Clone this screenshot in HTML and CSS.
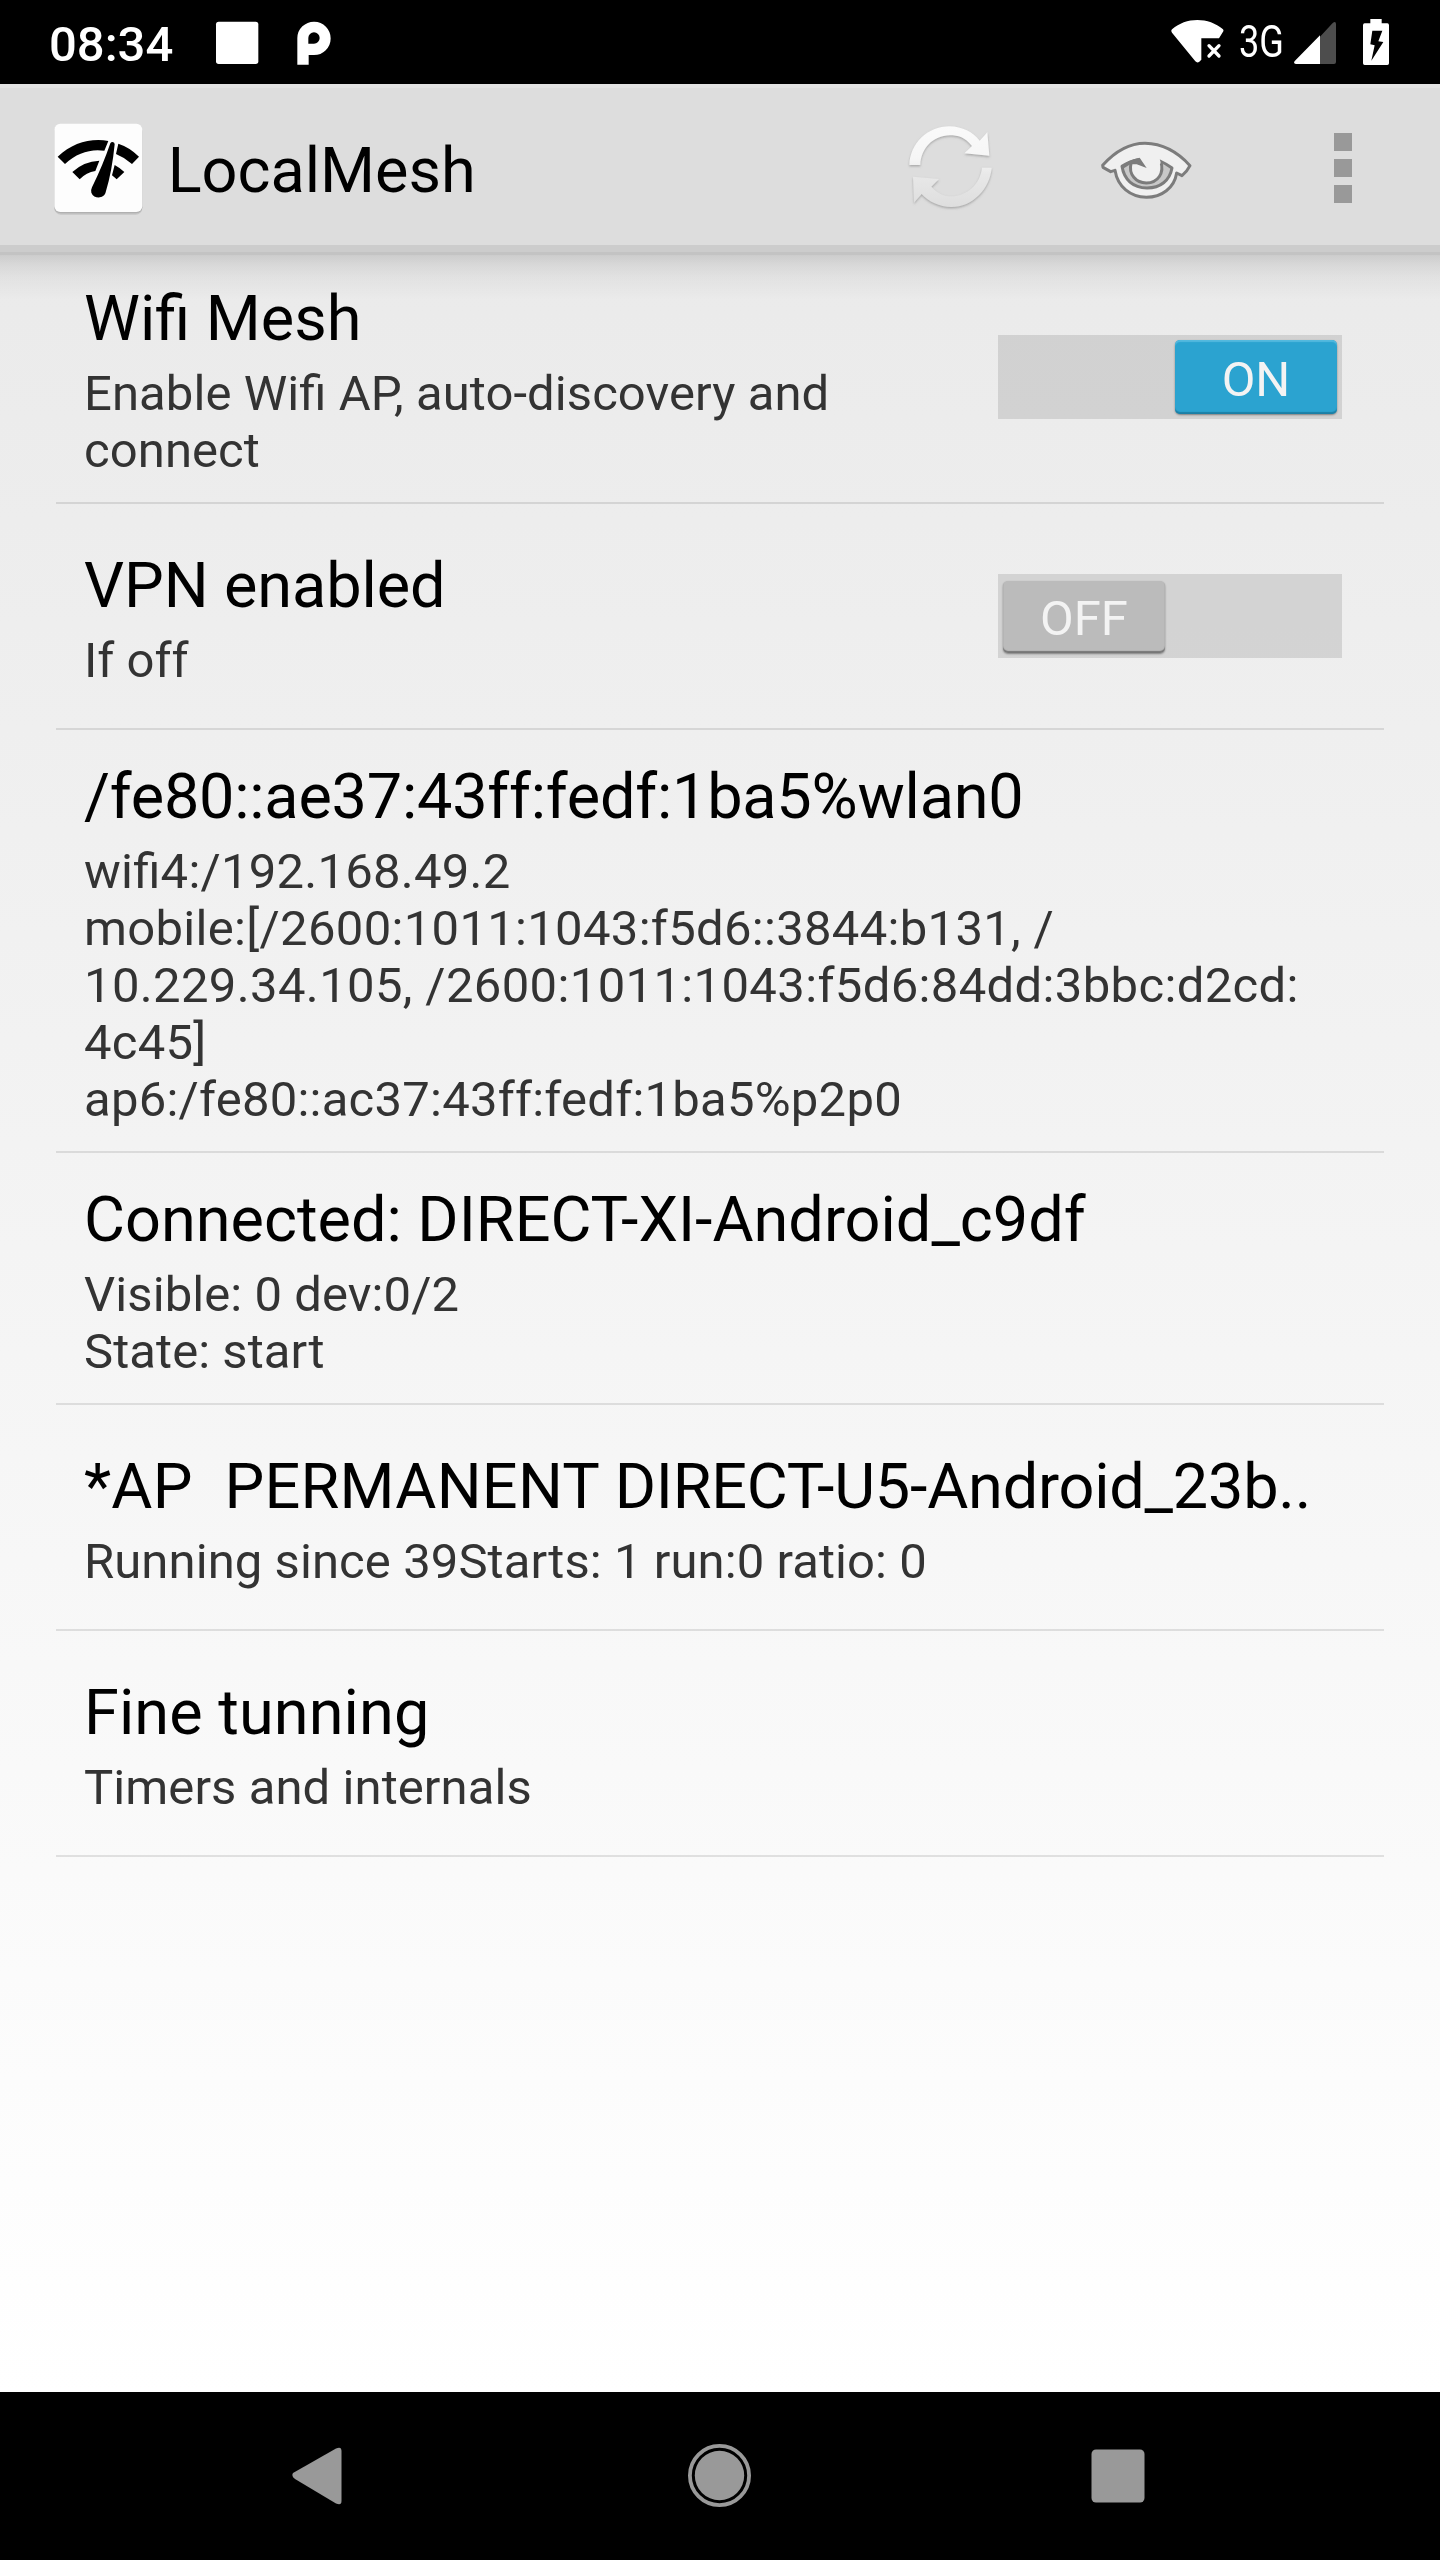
FILE: index.html
```html
<!DOCTYPE html>
<html lang="en">
<head>
<meta charset="utf-8">
<title>LocalMesh</title>
<link rel="stylesheet" href="styles.css">
</head>
<body>
<div class="screen">
  <header class="status-bar">
    <span class="clock">08:34</span>
    <svg class="notif-icons" viewBox="640 50 370 150">
      <rect x="649" y="64" width="127" height="127" rx="8" fill="#fff"/>
      <path fill="#fff" fill-rule="evenodd" d="M893 193V113A50 50 0 1 1 943 164H927V193ZM926 130H943A17 17 0 1 0 926 113Z"/>
    </svg>
    <div class="system-icons">
      <svg class="wifi" viewBox="30 24 171 144">
        <path fill="#fff" d="M34 64Q33 60 37 57C57 40 84 30 112 30S168 40 188 57Q192 60 190 64L177 85H124V149L118 155Q112 160 106 154L36 68Z"/>
        <path stroke="#fff" stroke-width="10" stroke-linecap="round" d="M147 107L177 138M177 107L147 138"/>
      </svg>
      <span class="network">3G</span>
      <svg class="signal" viewBox="0 0 126 126">
        <path fill="#4d4d4d" d="M78 44L114 5Q118 0 122 0Q126 0 126 6V120Q126 126 120 126H78Z"/>
        <path fill="#fff" d="M78 40V126H6Q0 126 0 121Q0 119 3 116Z"/>
      </svg>
      <svg class="battery" viewBox="0 0 78 138">
        <path fill="#fff" fill-rule="evenodd" d="M22 0H56V13H73Q78 13 78 19V133Q78 138 73 138H5Q0 138 0 133V19Q0 13 5 13H22ZM28 35L22 76L35 79L25 125L61 69L46 67L58 35Z"/>
      </svg>
    </div>
  </header>

  <div class="action-bar">
    <svg class="app-icon" viewBox="155 363 279 291">
      <rect x="162" y="376" width="264" height="268" rx="20" fill="#a8a8a8" opacity=".45"/>
      <rect x="162" y="374" width="264" height="266" rx="18" fill="#b0b0b0"/>
      <rect x="162" y="371" width="264" height="265" rx="18" fill="#fdfdfd"/>
      <path d="M172 470C208 436 250 420 294 420Q310 420 324 423L312 452Q302 451 292 451C257 452 224 464 194 492ZM354 431Q388 442 416 470L395 492Q374 473 347 462ZM216 516Q250 484 297 482L285 513Q258 517 238 538ZM343 495Q358 503 372 516L349 538L335 526Z"/>
      <path d="M330 430Q332 426 337 426Q343 427 343 433Q335 515 316 577C311 597 281 598 273 578Q271 570 275 562Q308 495 330 430Z"/>
    </svg>
    <h1 class="app-title">LocalMesh</h1>
    <div class="actions">
      <svg class="refresh" viewBox="45 40 270 270">
        <defs>
          <linearGradient id="arrowFill" gradientUnits="userSpaceOnUse" x1="0" y1="48" x2="0" y2="292">
            <stop offset="0" stop-color="#fafafa"/><stop offset=".4" stop-color="#f6f6f6"/>
            <stop offset=".6" stop-color="#e8e8e8"/><stop offset="1" stop-color="#dedede"/>
          </linearGradient>
          <filter id="arrowShadow" x="-10%" y="-10%" width="120%" height="120%">
            <feDropShadow dx="0" dy="4" stdDeviation="2.4" flood-color="#777" flood-opacity=".55"/>
          </filter>
        </defs>
        <g fill="url(#arrowFill)" filter="url(#arrowShadow)">
          <path d="M55 166C57 102 109 50 176 50C214 51 246 67 266 93L289 68L295 138L220 131L243 109C221 83 203 77 176 77C126 78 90 116 88 166Z"/>
          <path d="M273 174H302C297 237 245 292 181 292C145 291 113 276 92 253L69 279L66 201L144 208L121 231C139 250 158 260 181 260C229 259 268 222 273 174Z"/>
        </g>
      </svg>
      <svg class="eye" viewBox="626 88 284 188">
        <g stroke-linejoin="round" stroke="#7c7c7c" stroke-width="9">
          <path fill="#f0f0f0" d="M637 167C673 127 718 101 764 101C817 102 862 127 899 168C893 180 885 190 875 198L859 190C852 235 814 263 768 263C720 262 682 232 674 182L661 186L638 173Z"/>
          <path fill="#c8c8c8" d="M695 170Q717 154 744 150L766 172L783 151L809 154Q827 162 845 175C838 213 810 235 770 235C728 234 701 210 695 170Z"/>
        </g>
        <path fill="#f0f0f0" stroke="#7c7c7c" stroke-width="9" d="M722 161C714 194 737 220 768 220C803 220 823 190 811 155"/>
        <path fill="#f0f0f0" d="M747 142H807L811 160L795 182L766 190Z"/>
        <path fill="#7c7c7c" d="M692 170Q718 149 748 144L769 175L739 164L720 164L698 177Z"/>
      </svg>
      <div class="overflow"><i></i><i></i><i></i></div>
    </div>
  </div>

  <main class="list">
    <section class="row">
      <div class="text">
        <h2>Wifi Mesh</h2>
        <p class="wide-1">Enable Wifi AP, auto-discovery and<br>connect</p>
      </div>
      <div class="switch on"><span>ON</span></div>
    </section>
    <section class="row single">
      <div class="text">
        <h2 class="tight-1">VPN enabled</h2>
        <p>If off</p>
      </div>
      <div class="switch off"><span>OFF</span></div>
    </section>
    <section class="row">
      <div class="text">
        <h2 class="tight-2">/fe80::ae37:43ff:fedf:1ba5%wlan0</h2>
        <p class="wide-2">wifi4:/192.168.49.2<br><span class="wide-3">mobile:[/2600:1011:1043:f5d6::3844:b131, /</span><br><span class="wide-4">10.229.34.105, /2600:1011:1043:f5d6:84dd:3bbc:d2cd:</span><br>4c45]<br>ap6:/fe80::ac37:43ff:fedf:1ba5%p2p0</p>
      </div>
    </section>
    <section class="row">
      <div class="text">
        <h2>Connected: DIRECT-XI-Android_c9df</h2>
        <p class="wide-1">Visible: 0 dev:0/2<br>State: start</p>
      </div>
    </section>
    <section class="row single">
      <div class="text">
        <h2><span class="wide-2">*AP&nbsp; PERMANENT </span><span class="tight-2">DIRECT-U5-Android_23b..</span></h2>
        <p class="wide-1">Running since 39Starts: 1 run:0 ratio: 0</p>
      </div>
    </section>
    <section class="row single">
      <div class="text">
        <h2 class="wide-1">Fine tunning</h2>
        <p class="wide-1">Timers and internals</p>
      </div>
    </section>
  </main>

  <nav class="nav-bar">
    <svg viewBox="0 0 64 64"><path fill="#999" d="M7 29L50 4.500Q55.500 2 55.500 7V57Q55.500 62 50 59.500L9 35Q5 32 7 29Z"/></svg>
    <svg viewBox="0 0 64 64"><circle cx="33.500" cy="31.500" r="29.600" fill="none" stroke="#999" stroke-width="3.800"/><circle cx="33.500" cy="31.500" r="24.700" fill="#999"/></svg>
    <svg viewBox="0 0 64 64"><rect x="5.500" y="5.500" width="53" height="53" rx="4.500" fill="#999"/></svg>
  </nav>
</div>
</body>
</html>
```
FILE: styles.css
```css
* { box-sizing: border-box; }

body {
  margin: 0;
  font-family: Roboto, "Liberation Sans", sans-serif;
  font-feature-settings: "liga" 1;
}

svg { display: block; flex: none; overflow: visible; }

.screen {
  display: flex;
  flex-direction: column;
  width: 1440px;
  height: 2560px;
  overflow: hidden;
  background: linear-gradient(#e8e8e8, #fff 2392px);
}

/* Status bar */
.status-bar {
  display: flex;
  align-items: flex-start;
  height: 84px;
  padding-left: 49px;
  background: #000;
  color: #fff;
}
.clock {
  width: 164px;
  padding-top: 16px;
  font-size: 49px;
  font-weight: 500;
  line-height: 57px;
}
.notif-icons { width: 123.33px; height: 50px; margin-top: 16.67px; }
.system-icons { display: flex; margin-left: auto; padding-right: 51px; }
.wifi { width: 57px; height: 48px; margin-top: 18px; }
.network {
  width: 67px;
  padding: 16px 0 0 12px;
  font-size: 44px;
  line-height: 52px;
  white-space: nowrap;
  transform: scaleX(.82);
  transform-origin: 12px 0;
}
.signal { width: 42px; height: 42px; margin-top: 22px; }
.battery { width: 26px; height: 46px; margin: 19px 0 0 27px; }

/* Action bar */
.action-bar {
  display: flex;
  align-items: center;
  height: 168px;
  padding: 0 88px 7px 51.67px;
  background: linear-gradient(#e3e3e3 4px, #ddd 4px 161px, #ccc 161px);
}
.app-icon { width: 93px; height: 97px; margin-top: 10px; }
.app-title {
  margin: 13px 0 0 23px;
  font-size: 63px;
  font-weight: 400;
  line-height: 74px;
}
.actions { display: flex; align-items: center; margin-left: auto; padding-top: 7px; }
.refresh { width: 90px; height: 90px; }
.eye { width: 94.67px; height: 62.67px; margin: 5px 0 0 103px; }
.overflow { display: grid; gap: 8px; margin-left: 140.5px; }
.overflow i { width: 18px; height: 18px; background: #999; }

/* Preference list */
.list {
  flex: 1;
  padding: 0 56px;
  background: linear-gradient(#c3c3c3 3px, rgba(0, 0, 0, .13) 3px, rgba(0, 0, 0, .08) 13px, rgba(0, 0, 0, .04) 25px, transparent 48px);
}
.row {
  display: flex;
  align-items: center;
  justify-content: space-between;
  min-height: 226px;
  padding: 0 42px 0 28px;
  border-bottom: 2px solid rgba(0, 0, 0, .1);
}
.text { padding: 30px 0 23px; white-space: nowrap; }
.single .text { margin-bottom: 1px; }
.text h2 {
  margin: 0 0 9px;
  font-size: 63px;
  font-weight: 400;
  line-height: 74px;
}
.text p { margin: 0; color: #333; font-size: 49px; line-height: 57px; }

/* Tracking adjustments */
.wide-1 { letter-spacing: .08px; }
.wide-2 { letter-spacing: .24px; }
.wide-3 { letter-spacing: .31px; }
.wide-4 { letter-spacing: .36px; }
.tight-1 { letter-spacing: -.1px; }
.tight-2 { letter-spacing: -.22px; }

.switch {
  display: flex;
  width: 344px;
  height: 84px;
  padding: 5px;
  background: rgba(0, 0, 0, .11);
}
.switch span {
  width: 162px;
  height: 74px;
  border-radius: 5px;
  color: #f3f3f3;
  font-size: 49px;
  line-height: 79px;
  text-align: center;
}
.on { justify-content: flex-end; }
.on span {
  background: #2ba3d0;
  box-shadow: inset 0 2px 1px #53b9de, inset 0 -2px 1px #1c80a6, 0 1px 2px rgba(0, 0, 0, .4);
}
.switch.off span {
  height: 72px;
  margin-top: 2px;
  background: #bbb;
  line-height: 75px;
  box-shadow: inset 0 -2px 1px #777, 0 1px 2px rgba(0, 0, 0, .4);
}

/* Navigation bar */
.nav-bar {
  display: flex;
  justify-content: space-between;
  align-items: center;
  height: 168px;
  padding: 0 290px 0 286px;
  background: #000;
}
.nav-bar svg { width: 64px; height: 64px; }
```
